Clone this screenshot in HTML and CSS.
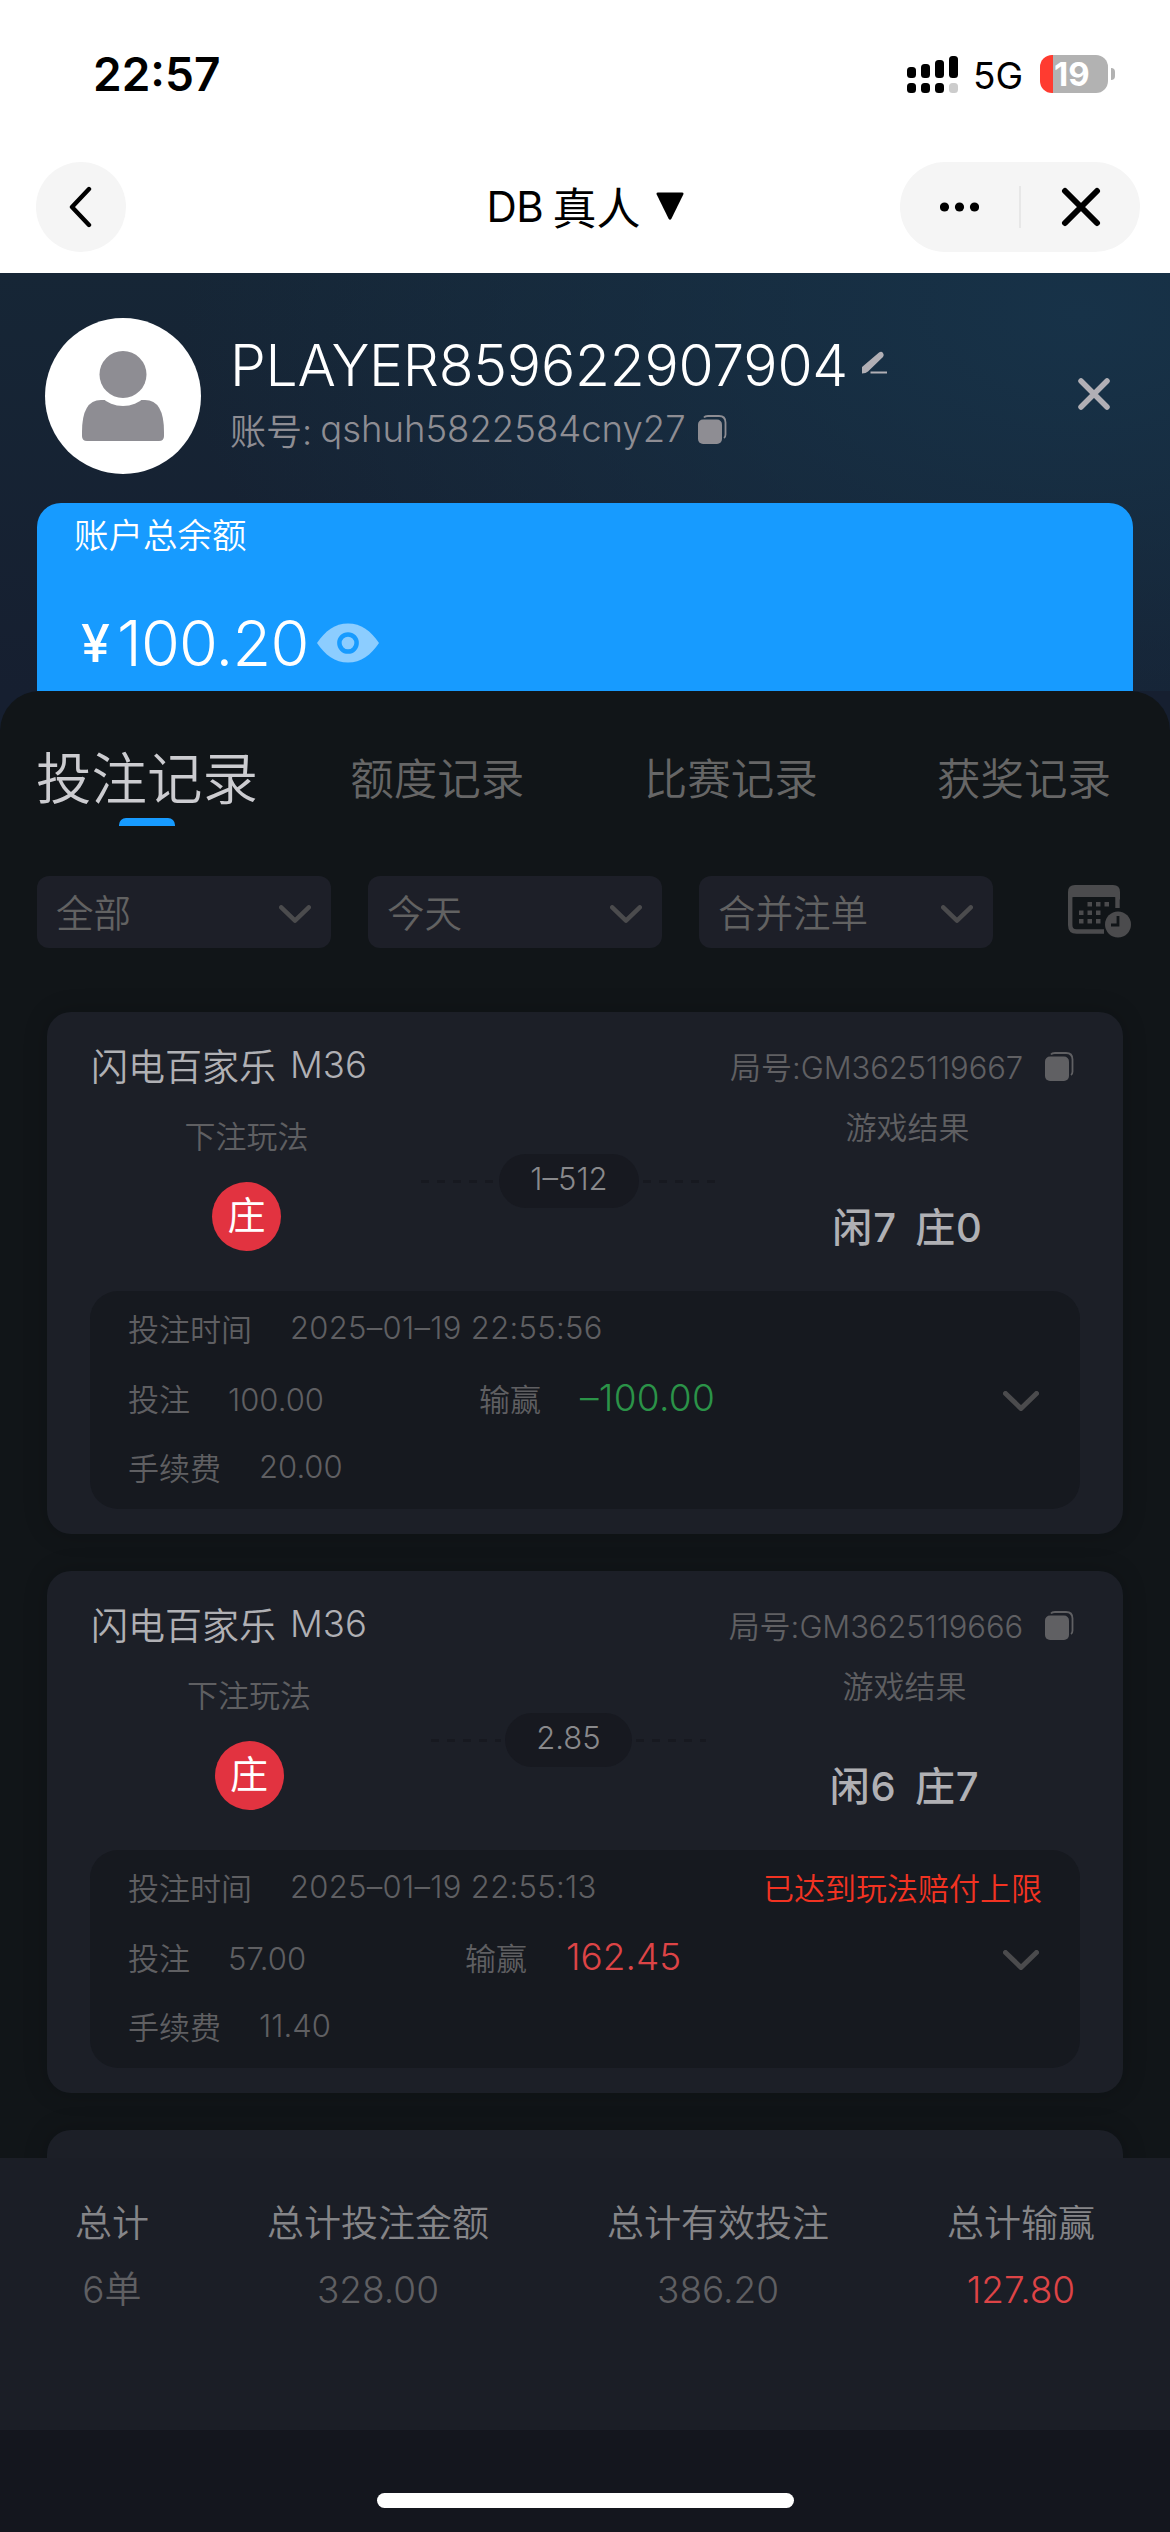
FILE: index.html
```html
<!DOCTYPE html>
<html lang="zh-CN">
<head>
<meta charset="utf-8">
<title>DB真人</title>
<link rel="stylesheet" href="styles.css">
</head>
<body>
<svg class="defs" width="0" height="0" aria-hidden="true">
  <symbol id="copy" viewBox="0 0 29 29"><rect x="0" y="4.5" width="24" height="24.500" rx="5"/><path d="M6 2.600Q7 1 10 1H21Q27.500 1 27.500 7.500V19.500Q27.500 22 26 23" fill="none" stroke="currentColor" stroke-width="1.800"/></symbol>
  <symbol id="down" viewBox="0 0 36 20"><path d="M2.500 2.500 18 17.500 33.500 2.500" fill="none" stroke="currentColor" stroke-width="5" stroke-linecap="round" stroke-linejoin="round"/></symbol>
</svg>

<header class="status">
  <span class="time">22:57</span>
  <svg class="signal" width="51" height="38" viewBox="0 0 51 38"><rect y="12" width="9" height="11" rx="3.500"/><rect x="14" y="9" width="9" height="14" rx="3.500"/><rect x="28" y="5" width="9" height="18" rx="3.500"/><rect x="42" y="1" width="9" height="22" rx="3.500"/><rect y="28" width="9" height="10" rx="3.500"/><rect x="14" y="28" width="9" height="10" rx="3.500"/><rect x="28" y="28" width="9" height="10" rx="3.500"/><rect x="42" y="28" width="9" height="10" rx="3.500" fill="#ccc"/></svg>
  <span class="net">5G</span>
  <span class="battery">19</span>
  <i class="nub"></i>
</header>

<nav class="nav">
  <span class="back"><svg width="24" height="42" viewBox="0 0 24 42"><path d="M21 3 4 21 21 39" fill="none" stroke="#000" stroke-width="4.400" stroke-linecap="round" stroke-linejoin="round"/></svg></span>
  <h1 class="title"><span class="latin">DB</span><span>真人</span><svg width="28" height="28" viewBox="0 0 28 28"><path d="M2 .5H26Q28 .5 27.300 2.500L15.500 26.500Q14 29 12.500 26.500L.7 2.500Q0 .5 2 .5Z"/></svg></h1>
  <span class="capsule">
    <svg width="39" height="10" viewBox="0 0 39 10"><circle cx="4.500" cy="5" r="4.600"/><circle cx="19.500" cy="5" r="4.600"/><circle cx="34.500" cy="5" r="4.600"/></svg>
    <i class="bar"></i>
    <svg class="x" width="40" height="40" viewBox="0 0 40 40"><path d="M4 4 36 36M36 4 4 36" stroke="#000" stroke-width="6" stroke-linecap="round"/></svg>
  </span>
</nav>

<section class="profile">
  <div class="user">
    <svg class="avatar" width="156" height="156" viewBox="0 0 156 156"><circle cx="78" cy="78" r="78" fill="#fff"/><path d="M37 114Q37 82 56 82H100Q119 82 119 114V118Q119 123 114 123H42Q37 123 37 118Z" fill="#8e8d93"/><circle cx="78" cy="57" r="31" fill="#fff"/><circle cx="78" cy="56.500" r="23.500" fill="#8e8d93"/></svg>
    <div class="who">
      <div class="name"><span>PLAYER859622907904</span><svg width="26" height="24" viewBox="0 0 26 24"><path d="M0 22.500V16L17 1.500Q19.500 0 21 2 22.500 4 21 6L6 20.500Q4 22.500 0 22.500Z" fill="#b1afb5"/><path d="M8.500 21.500H25" stroke="#b1afb5" stroke-width="2"/></svg></div>
      <div class="account"><span>账号:</span><span class="id">qshuh5822584cny27</span><svg class="copy"><use href="#copy"/></svg></div>
    </div>
    <svg class="close" width="32" height="32" viewBox="0 0 32 32"><path d="M3 3 29 29M29 3 3 29" stroke="#b1afb5" stroke-width="5.500" stroke-linecap="round"/></svg>
  </div>
  <div class="balance">
    <div class="balance-label">账户总余额</div>
    <div class="amount"><b>¥</b><span>100.20</span><svg width="62" height="40" viewBox="0 0 62 40"><path d="M0 20C8 8 18 .5 31 .5S54 8 62 20C54 32 44 39.500 31 39.500S8 32 0 20Z" fill="#8ccdff"/><circle cx="31" cy="20" r="8.600" fill="#8ccdff" stroke="#179bff" stroke-width="4.500"/></svg></div>
  </div>
</section>

<main class="sheet">
  <div class="tabs"><span class="tab on">投注记录</span><span class="tab">额度记录</span><span class="tab">比赛记录</span><span class="tab">获奖记录</span></div>
  <div class="filters">
    <div class="select">全部<svg><use href="#down"/></svg></div>
    <div class="select">今天<svg><use href="#down"/></svg></div>
    <div class="select">合并注单<svg><use href="#down"/></svg></div>
    <svg class="calendar" width="64" height="54" viewBox="0 0 64 54"><path d="M36 46.500H8.500Q2.200 46.500 2.200 40V9M49.500 9V23" fill="none" stroke="#4b4b4d" stroke-width="4.400"/><path d="M0 12V7Q0 0 7 0H45Q52 0 52 7V15Q50 12 46 12H6Q2 12 0 15Z" fill="#4b4b4d"/><path d="M19.500 17h4.500v4.500h-4.500zM28 17h4.500v4.500H28zM36.500 17H41v4.500h-4.500zM11 25.500h4.500V30H11zM19.500 25.500h4.500V30h-4.500zM28 25.500h4.500V30H28zM11 34h4.500v4.500H11zM19.500 34h4.500v4.500h-4.500zM28 34h4.500v4.500H28z" fill="#4b4b4d"/><circle cx="50" cy="39.500" r="13" fill="#4b4b4d"/><path d="M50 31V40H43" fill="none" stroke="#111518" stroke-width="2.800"/></svg>
  </div>

  <div class="list">
    <article class="card">
      <div class="head"><span class="game">闪电百家乐</span><span class="table">M36</span><span class="round">局号:<span>GM3625119667</span></span><svg class="copy"><use href="#copy"/></svg></div>
      <div class="play">
        <div class="bet"><span>下注玩法</span><b>庄</b></div>
        <div class="odds"><i></i><span>1–512</span><i></i></div>
        <div class="result"><span>游戏结果</span><b>闲7 庄0</b></div>
      </div>
      <div class="detail">
        <div class="row"><span>投注时间</span><span class="num date">2025–01–19 22:55:56</span></div>
        <div class="row"><span class="stake">投注<span class="num">100.00</span></span><span>输赢</span><span class="win lose">–100.00</span><svg class="more"><use href="#down"/></svg></div>
        <div class="row"><span>手续费</span><span class="num">20.00</span></div>
      </div>
    </article>
    <article class="card second">
      <div class="head"><span class="game">闪电百家乐</span><span class="table">M36</span><span class="round">局号:<span>GM3625119666</span></span><svg class="copy"><use href="#copy"/></svg></div>
      <div class="play">
        <div class="bet"><span>下注玩法</span><b>庄</b></div>
        <div class="odds"><i></i><span>2.85</span><i></i></div>
        <div class="result"><span>游戏结果</span><b>闲6 庄7</b></div>
      </div>
      <div class="detail">
        <div class="row"><span>投注时间</span><span class="num date">2025–01–19 22:55:13</span><span class="limit">已达到玩法赔付上限</span></div>
        <div class="row"><span class="stake">投注<span class="num">57.00</span></span><span>输赢</span><span class="win">162.45</span><svg class="more"><use href="#down"/></svg></div>
        <div class="row"><span>手续费</span><span class="num">11.40</span></div>
      </div>
    </article>
    <article class="card"></article>
  </div>
</main>

<footer class="totals">
  <div><span>总计</span><em>6单</em></div>
  <div><span>总计投注金额</span><em>328.00</em></div>
  <div><span>总计有效投注</span><em>386.20</em></div>
  <div><span>总计输赢</span><em class="red">127.80</em></div>
</footer>
<div class="home"><i></i></div>
</body>
</html>
```

FILE: styles.css
```css
* { box-sizing: border-box; margin: 0; padding: 0; }
body { width: 1170px; height: 2532px; overflow: hidden; display: flex; flex-direction: column; background: #fff; font-family: Inter, "Noto Sans CJK SC", sans-serif; font-weight: 360; white-space: nowrap; }
svg { display: block; flex: none; }
i, em { font-style: normal; }
.defs { position: absolute; }

.status { height: 150px; padding: 0 55px 2px 93px; display: flex; align-items: center; }
.time { font-size: 46px; font-weight: 600; letter-spacing: 0; flex: 1; }
.net { font-size: 37px; font-weight: 400; margin: 3px 0 0 15px; width: 66px; }
.battery { width: 68px; height: 38px; margin-left: 1px; padding-left: 14px; border-radius: 12px; background: linear-gradient(90deg, #ff3b30 13px, #b2b2b2 13px); color: #fff; font-size: 33px; font-weight: 700; line-height: 38px; }
.nub { width: 4px; height: 12px; margin-left: 3px; border-radius: 0 4px 4px 0; background: #b2b2b2; }

.nav { height: 123px; padding: 12px 30px 0 36px; display: flex; align-items: flex-start; justify-content: space-between; }
.back { width: 90px; height: 90px; border-radius: 50%; background: #f5f5f5; display: flex; align-items: center; padding-left: 32px; }
.title { height: 90px; display: flex; align-items: center; margin-left: 144px; padding-bottom: 2px; font-size: 44px; font-weight: 400; }
.title .latin { font-size: 42px; letter-spacing: -.5px; width: 66px; }
.title svg { margin-left: 15px; }
.capsule { width: 240px; height: 90px; border-radius: 45px; background: #f5f5f5; display: flex; align-items: center; padding-left: 40px; }
.capsule .bar { width: 2px; height: 42px; background: #e7e7e7; margin: 0 40px; }

.profile { height: 418px; padding: 45px 37px 0; background: radial-gradient(ellipse 900px 560px at 1080px 40px, #173248, rgba(23,50,72,0) 100%), linear-gradient(#162636, #161f30); }
.user { height: 185px; display: flex; align-items: flex-start; padding-left: 8px; }
.who { margin-left: 29px; flex: 1; }
.name { height: 95px; display: flex; align-items: center; color: #fff; font-size: 57px; line-height: 95px; letter-spacing: -.25px; }
.name span { width: 632px; }
.name svg { margin-top: -5px; }
.account { height: 32px; display: flex; align-items: center; font-size: 36px; color: #8e8d93; }
.account .id { margin-left: 8px; width: 378px; font-size: 36.500px; }
.copy { width: 29px; height: 29px; fill: currentColor; }
.close { margin: 60px 23px 0 0; }
.balance { height: 188px; border-radius: 24px 24px 0 0; background: #179bff; padding: 13px 37px 0; color: #fff; }
.balance-label { font-size: 34.500px; line-height: 40px; }
.amount { margin: 43px 0 0 7px; height: 88px; display: flex; align-items: center; font-size: 63px; letter-spacing: -.8px; }
.amount b { font-size: 52px; font-weight: 500; width: 36px; }
.amount span { width: 200px; }

.sheet { height: 1467px; overflow: hidden; border-radius: 40px 40px 0 0; background: #111518; box-shadow: 0 -40px 0 40px #161f30; clip-path: inset(0); }
.tabs { height: 185px; padding: 61px 59px 0 36px; display: flex; justify-content: space-between; color: #666; font-size: 43.500px; line-height: 54px; }
.tab.on { width: 222px; margin-right: -27px; color: #ccccd0; font-size: 55.500px; display: flex; flex-direction: column; align-items: center; }
.tab.on::after { content: ""; width: 56px; height: 8px; margin-top: 12px; border-radius: 7px 7px 0 0; background: #179bff; }
.filters { height: 72px; padding: 0 38px 0 37px; display: flex; gap: 37px; align-items: center; }
.select { width: 294px; height: 72px; border-radius: 12px; background: #1d1f28; color: #626262; font-size: 37.500px; display: flex; align-items: center; justify-content: space-between; padding: 0 20px 4px 19px; }
.select svg { width: 32px; height: 18px; color: #4b4b4d; margin-top: 8px; }
.calendar { margin-left: auto; }
.list { padding: 64px 47px 0; display: flex; flex-direction: column; gap: 37px; }
.card { height: 522px; flex: none; border-radius: 24px; background: #1c1f27; box-shadow: 0 0 24px rgba(0,0,0,.2); padding: 30px 43px 0; color: #5f5f62; font-size: 31px; }
.head { height: 48px; display: flex; align-items: center; color: #606063; padding: 0 6px 2px 1px; }
.game { font-size: 37px; color: #b0b0b4; }
.table { font-size: 36.500px; color: #b0b0b4; margin-left: 14px; }
.round { margin: 0 22px 0 auto; }
.round span { letter-spacing: -.1px; }
.head .copy { margin-top: 3px; }
.play { height: 201px; display: flex; }
.bet { width: 313px; display: flex; flex-direction: column; align-items: center; padding-top: 28px; }
.bet span, .result span { line-height: 38px; }
.bet b { width: 69px; height: 69px; margin-top: 26px; border-radius: 50%; background: #e23340; color: #fff; font-size: 38px; line-height: 66px; font-weight: 400; text-align: center; }
.odds { flex: 1; height: 54px; margin-top: 64px; display: flex; justify-content: center; align-items: center; gap: 4px; color: #89898c; }
.odds span { height: 54px; line-height: 50px; padding: 0 31px; border-radius: 27px; background: #171920; }
.odds i { width: 74px; height: 3px; background: repeating-linear-gradient(90deg, #171920 0 8px, transparent 8px 16px); }
.second .odds i { width: 70px; }
.result { width: 345px; display: flex; flex-direction: column; align-items: center; padding-top: 19px; }
.result b { color: #b0b0b4; font-size: 40px; font-weight: 500; line-height: 46px; margin-top: 58px; letter-spacing: .8px; word-spacing: 7px; }
.second .bet { width: 318px; }
.second .result { width: 351px; }
.detail { height: 218px; border-radius: 28px; background: #16191f; padding: 2px 38px 0 38px; }
.row { height: 69.500px; display: flex; align-items: center; }
.num { margin-left: 38px; }
.date { letter-spacing: .3px; }
.stake { width: 351px; }
.second .stake { width: 337px; }
.win { font-size: 37px; margin-left: 39px; color: #dd4446; }
.win.lose { color: #2b9348; letter-spacing: .3px; }
.more { width: 36px; height: 20px; margin: 8px 3px 0 auto; color: #4b4b4d; }
.limit { color: #f23322; margin-left: auto; }

.totals { height: 272px; padding: 42px 75px 0; background: #1b1e26; display: flex; justify-content: space-between; color: #858588; font-size: 37px; }
.totals div { display: flex; flex-direction: column; align-items: center; line-height: 48px; gap: 18px; }
.totals em { color: #5f5f62; }
.totals .red { color: #dd4446; }
.home { height: 102px; background: #14161e; padding-top: 63px; }
.home i { display: block; width: 417px; height: 15px; border-radius: 8px; background: #fff; margin: 0 auto; }
```
